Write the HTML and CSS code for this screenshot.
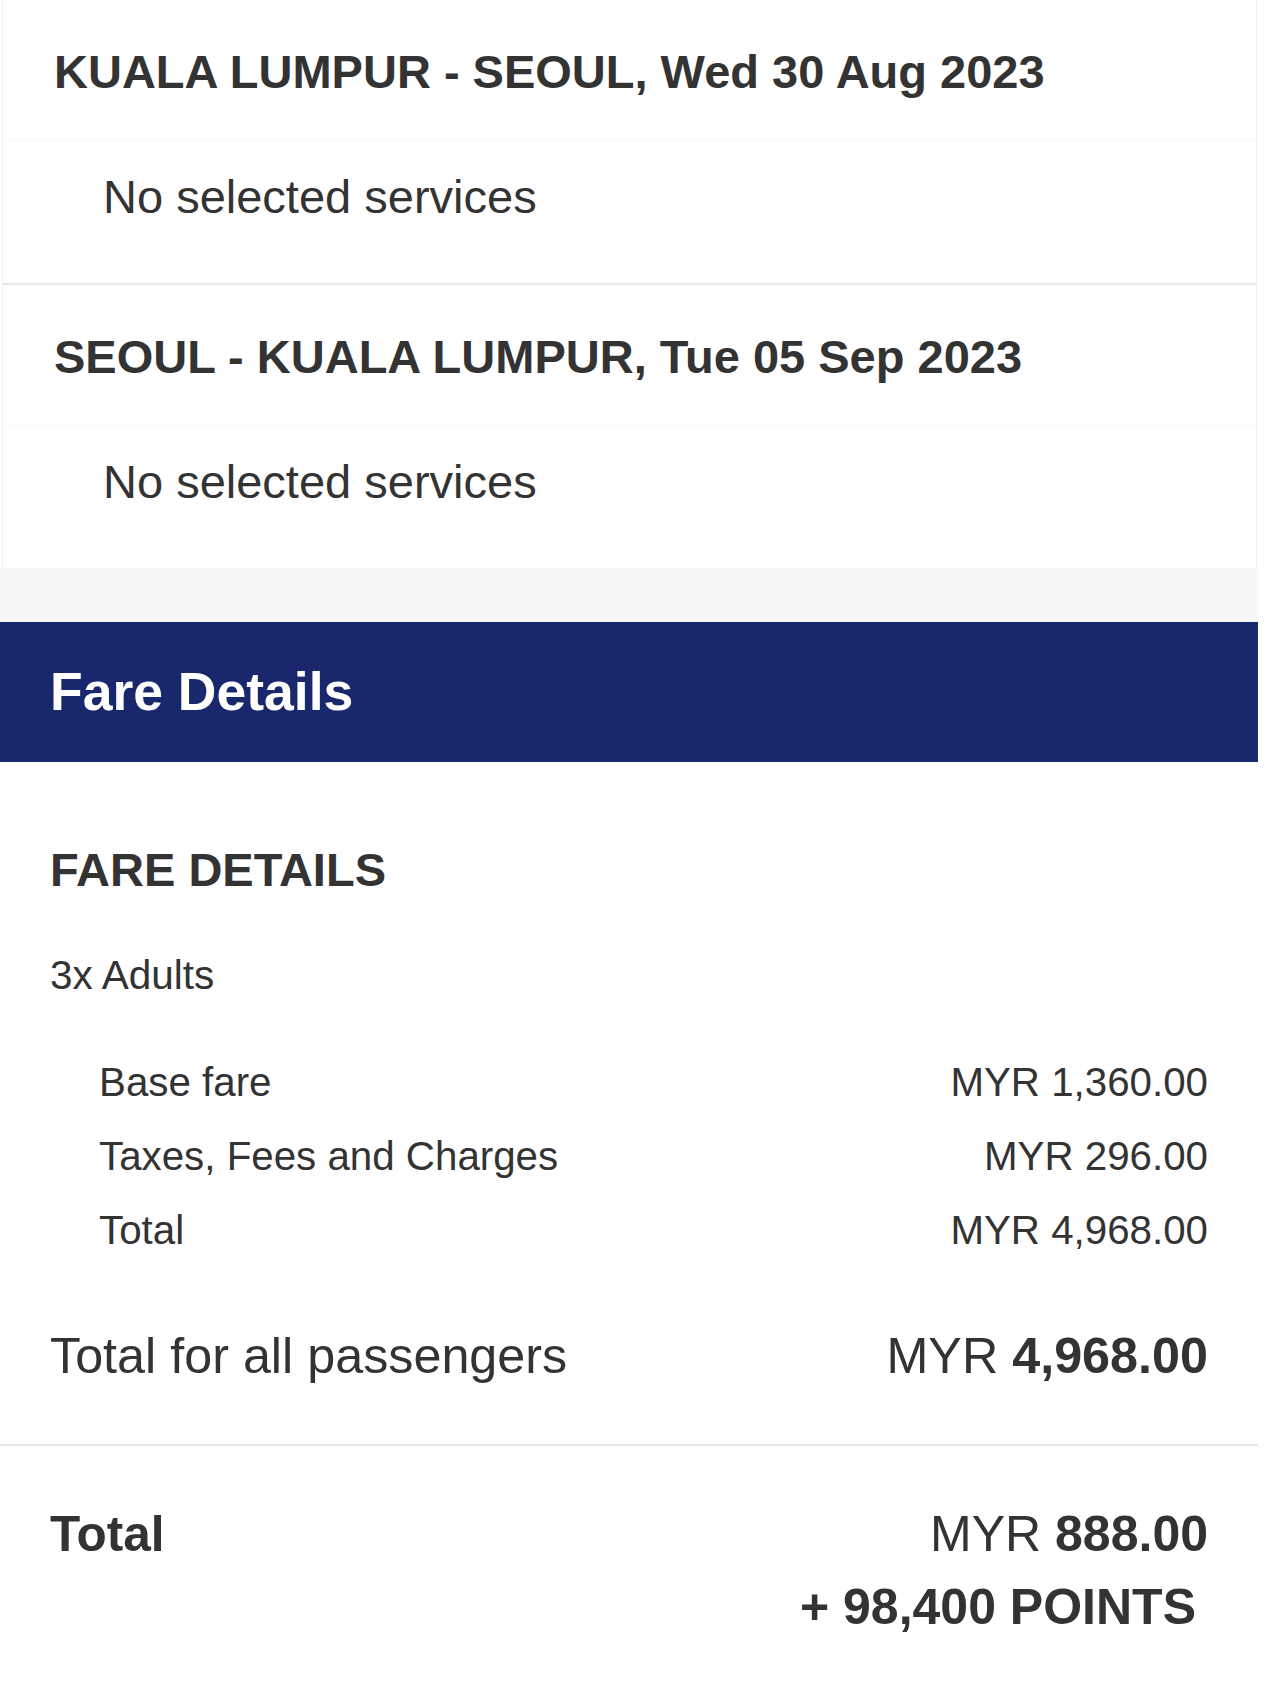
FILE: index.html
```html
<!DOCTYPE html>
<html lang="en">
<head>
<meta charset="utf-8">
<title>Fare Details</title>
<link rel="stylesheet" href="styles.css">
</head>
<body>
<div class="page">
  <section class="card card-first">
    <div class="card-head">KUALA LUMPUR - SEOUL, Wed 30 Aug 2023</div>
    <div class="card-body">No selected services</div>
  </section>
  <section class="card">
    <div class="card-head">SEOUL - KUALA LUMPUR, Tue 05 Sep 2023</div>
    <div class="card-body">No selected services</div>
  </section>
  <div class="gap-band"></div>
  <div class="banner">Fare Details</div>
  <section class="fare">
    <h2 class="fare-title">FARE DETAILS</h2>
    <div class="pax">3x Adults</div>
    <div class="lines">
      <div class="line"><span>Base fare</span><span>MYR 1,360.00</span></div>
      <div class="line"><span>Taxes, Fees and Charges</span><span>MYR 296.00</span></div>
      <div class="line"><span>Total</span><span>MYR 4,968.00</span></div>
    </div>
    <div class="all-pax"><span>Total for all passengers</span><span>MYR <b>4,968.00</b></span></div>
  </section>
  <div class="divider"></div>
  <section class="grand">
    <div class="grand-label">Total</div>
    <div class="grand-values">
      <div class="grand-money">MYR <b>888.00</b></div>
      <div class="grand-points">+ 98,400 POINTS</div>
    </div>
  </section>
</div>
</body>
</html>
```

FILE: styles.css
```css
html, body {
  margin: 0;
  padding: 0;
  background: #ffffff;
}

body {
  font-family: "Liberation Sans", Arial, sans-serif;
  color: #333333;
}

.page {
  width: 1258px;
}

.card {
  margin: 0 1px 0 2px;
  border-left: 1px solid #efefef;
  border-right: 1px solid #efefef;
  background: #ffffff;
}

.card-first {
  border-bottom: 2px solid #e8e8e8;
}

.card-head {
  padding: 43px 0 39px 51px;
  font-size: 47px;
  line-height: 58px;
  font-weight: 700;
  border-bottom: 1px solid #f7f7f7;
}

.card-body {
  padding: 28px 0 58px 100px;
  font-size: 47px;
  line-height: 56px;
}

.gap-band {
  height: 54px;
  background: #f7f7f7;
}

.banner {
  background: #19286c;
  color: #ffffff;
  font-size: 53.5px;
  line-height: 60px;
  font-weight: 700;
  padding: 40px 50px;
}

.fare {
  padding: 80px 50px 58px 50px;
}

.fare-title {
  margin: 0;
  font-size: 47px;
  line-height: 55px;
  font-weight: 700;
}

.pax {
  margin-top: 55px;
  font-size: 40.5px;
  line-height: 47px;
}

.lines {
  margin-top: 47px;
  padding-left: 49px;
}

.line {
  display: flex;
  justify-content: space-between;
  font-size: 40.3px;
  line-height: 74px;
}

.all-pax {
  margin-top: 58px;
  display: flex;
  justify-content: space-between;
  font-size: 50.3px;
  line-height: 60px;
}

.all-pax b,
.grand-money b {
  font-weight: 700;
}

.divider {
  height: 2px;
  background: #e6e6e6;
}

.grand {
  padding: 58px 50px 60px 50px;
  display: flex;
  justify-content: space-between;
  align-items: flex-start;
}

.grand-label {
  font-size: 49.5px;
  line-height: 60px;
  font-weight: 700;
}

.grand-values {
  text-align: right;
}

.grand-money {
  font-size: 50px;
  line-height: 60px;
}

.grand-points {
  margin-top: 13px;
  padding-right: 12px;
  font-size: 50px;
  line-height: 60px;
  font-weight: 700;
}
```
